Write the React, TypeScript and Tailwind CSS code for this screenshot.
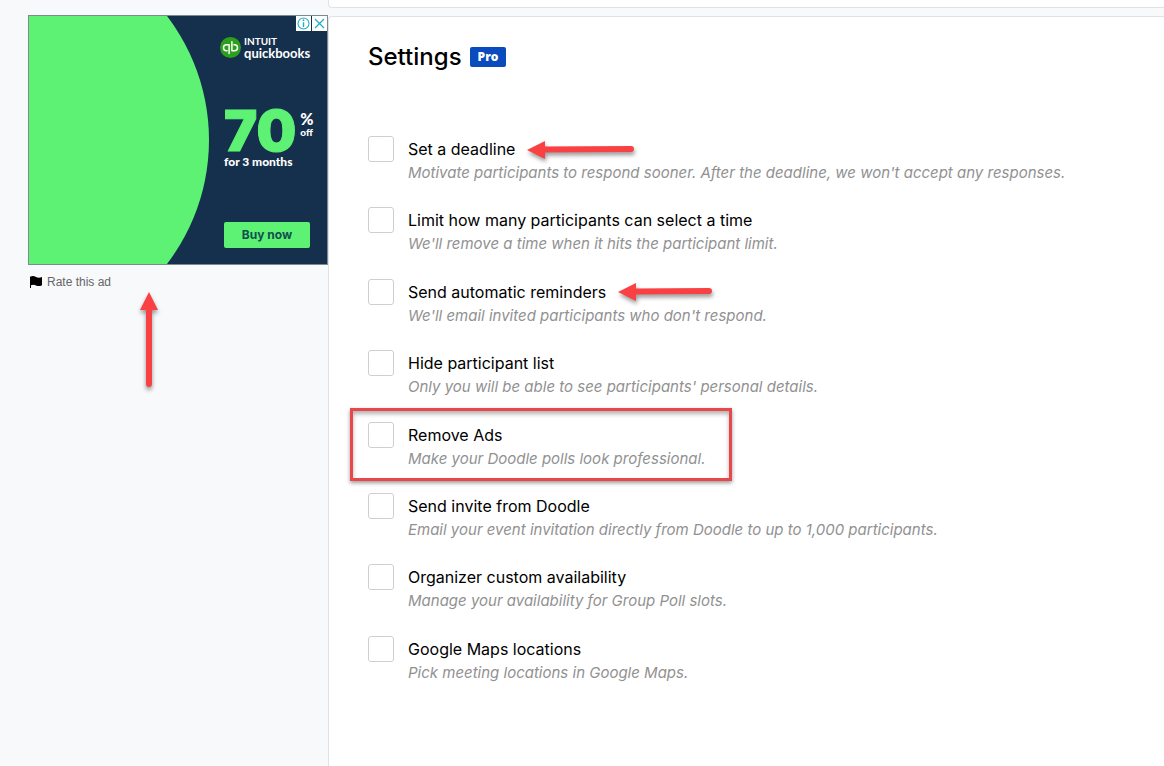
type Setting = {
  id: string;
  title: string;
  description: string;
  arrow?: number;
  boxed?: boolean;
};

const settings: Setting[] = [
  {
    id: "deadline",
    title: "Set a deadline",
    description:
      "Motivate participants to respond sooner. After the deadline, we won't accept any responses.",
    arrow: 107,
  },
  {
    id: "limit",
    title: "Limit how many participants can select a time",
    description: "We'll remove a time when it hits the participant limit.",
  },
  {
    id: "reminders",
    title: "Send automatic reminders",
    description: "We'll email invited participants who don't respond.",
    arrow: 94,
  },
  {
    id: "hide-list",
    title: "Hide participant list",
    description: "Only you will be able to see participants' personal details.",
  },
  {
    id: "remove-ads",
    title: "Remove Ads",
    description: "Make your Doodle polls look professional.",
    boxed: true,
  },
  {
    id: "invite",
    title: "Send invite from Doodle",
    description:
      "Email your event invitation directly from Doodle to up to 1,000 participants.",
  },
  {
    id: "availability",
    title: "Organizer custom availability",
    description: "Manage your availability for Group Poll slots.",
  },
  {
    id: "maps",
    title: "Google Maps locations",
    description: "Pick meeting locations in Google Maps.",
  },
];

export default function App() {
  return (
    <div className="flex min-h-screen bg-[#f7f9fb] font-['Inter',sans-serif] text-black">
      <aside className="w-[328px] shrink-0 pt-[15px] pl-7">
        <Ad />
        <button className="mt-2 flex items-center gap-1 pl-0.5 text-[12px] leading-[18px] text-[#666666] font-['Liberation_Sans',sans-serif]">
          <FlagIcon />
          Rate this ad
        </button>
        <UpArrow />
      </aside>

      <main className="flex min-w-0 flex-1 flex-col gap-2">
        <div className="h-2 rounded-bl border-b border-l border-[#dfe3e8] bg-white" />
        <section className="flex-1 rounded-tl border-t border-l border-[#dfe3e8] bg-white pt-6 pl-[39px]">
          <div className="flex items-center gap-2">
            <h1 className="text-2xl font-medium">Settings</h1>
            <span className="rounded-xs bg-[#0a4bbd] px-2 text-[12px] leading-5 font-extrabold text-white font-['Open_Sans',sans-serif]">
              Pro
            </span>
          </div>
          <ul className="mt-[63px] grid min-h-[571px] auto-rows-fr">
            {settings.map((setting) => (
              <SettingRow key={setting.id} setting={setting} />
            ))}
          </ul>
        </section>
      </main>
    </div>
  );
}

function SettingRow({ setting }: { setting: Setting }) {
  return (
    <li className="relative flex items-start gap-[14px]">
      <input
        id={setting.id}
        type="checkbox"
        className="size-[26px] shrink-0 appearance-none rounded-[3px] border border-[#cfcfcf] bg-white checked:bg-[#0a4bbd]"
      />
      <div className="pt-0.5">
        <div className="flex items-center gap-3">
          <label htmlFor={setting.id} className="text-base leading-[23px]">
            {setting.title}
          </label>
          {setting.arrow && <LeftArrow length={setting.arrow} />}
        </div>
        <p className="text-[15px] leading-[23px] text-[#919191] italic">
          {setting.description}
        </p>
      </div>
      {setting.boxed && (
        <div className="pointer-events-none absolute -top-[14px] -left-[18px] h-[73px] w-[382px] border-3 border-[#e8474c] shadow-[0_2px_4px_rgba(0,0,0,0.4),inset_0_3px_4px_rgba(0,0,0,0.3)]" />
      )}
    </li>
  );
}

function Ad() {
  return (
    <div className="relative h-[250px] w-[300px] overflow-hidden border border-[#7f8a8f] bg-[#15304d] text-white">
      <svg className="absolute inset-0" width="298" height="248" aria-hidden="true">
        <circle cx="-24" cy="124" r="204" fill="#5df273" />
      </svg>
      <div className="absolute top-0 right-0 flex gap-px">
        <button aria-label="Ad info" className="bg-white">
          <svg width="15" height="15" viewBox="0 0 15 15" fill="none" stroke="#1faec6">
            <circle cx="7.5" cy="7.5" r="5.5" strokeWidth="1.1" />
            <path d="M7.5 6.2v4.8" strokeWidth="1.4" />
            <circle cx="7.5" cy="4.2" r=".9" fill="#1faec6" stroke="none" />
          </svg>
        </button>
        <button aria-label="Close ad" className="bg-white">
          <svg width="15" height="15" viewBox="0 0 15 15" stroke="#1faec6" strokeWidth="1.3">
            <path d="M3 3l9 9M12 3l-9 9" />
          </svg>
        </button>
      </div>
      <div className="relative ml-[191px] flex flex-col items-start pt-[19px]">
        <div className="flex items-center gap-[3px] font-['Lato',sans-serif]">
          <QbLogo />
          <div>
            <p className="text-[10px] leading-3 font-bold">INTUIT</p>
            <p className="text-[13px] leading-[13px] font-bold">quickbooks</p>
          </div>
        </div>
        <div className="mt-12 ml-1 flex gap-1">
          <span className="text-[56px] leading-[46px] font-black text-[#5df273] [-webkit-text-stroke:1px_#5df273]">
            70
          </span>
          <span className="pt-[3px] font-['Lato',sans-serif] font-black">
            <span className="block text-[16px] leading-4">%</span>
            <span className="block text-[10px] leading-[10px]">off</span>
          </span>
        </div>
        <p className="mt-px ml-1 text-[12px] leading-[14px] font-black font-['Lato',sans-serif]">
          for 3 months
        </p>
        <button className="mt-[53px] ml-1 h-[26px] w-[86px] rounded-xs bg-[#5df273] text-[12px] font-bold text-[#12504f]">
          Buy now
        </button>
      </div>
    </div>
  );
}

function QbLogo() {
  return (
    <svg width="21" height="21" viewBox="0 0 21 21" fill="none" aria-hidden="true">
      <circle cx="10.5" cy="10.5" r="10.5" fill="#2ca01c" />
      <g stroke="#fff" strokeWidth="1.5" strokeLinecap="round">
        <path d="M9.1 7.7H6.5a3 3 0 0 0 0 6h.6M9.1 7.7v8.8" />
        <path d="M11.9 13.7h2.6a3 3 0 0 0 0-6h-.6M11.9 13.7V4.8" />
      </g>
    </svg>
  );
}

function FlagIcon() {
  return (
    <svg width="13" height="13" viewBox="0 0 13 13" aria-hidden="true">
      <path d="M0 .8C2.2-.2 4-.1 6 .9s3.800 1 6 0v8.300c-2.200 1.100-4.200 1.100-6 .2-1.700-.8-3.200-.8-5-.1V12H0z" />
    </svg>
  );
}

function LeftArrow({ length }: { length: number }) {
  return (
    <svg
      className="h-5 overflow-visible drop-shadow-[1px_3px_2px_rgba(0,0,0,0.4)]"
      width={length}
      height="20"
      aria-hidden="true"
    >
      <path d="M0 10 18 1v18z" fill="#f94144" />
      <path d={`M16 9.500L${length - 3} 9`} stroke="#f94144" strokeWidth="6" strokeLinecap="round" />
    </svg>
  );
}

function UpArrow() {
  return (
    <svg
      className="mt-px ml-[112px] overflow-visible drop-shadow-[0_3px_2px_rgba(0,0,0,0.4)]"
      width="18"
      height="96"
      aria-hidden="true"
    >
      <path d="M9 0l9 18H0z" fill="#f94144" />
      <path d="M9 16v76" stroke="#f94144" strokeWidth="6" strokeLinecap="round" />
    </svg>
  );
}
